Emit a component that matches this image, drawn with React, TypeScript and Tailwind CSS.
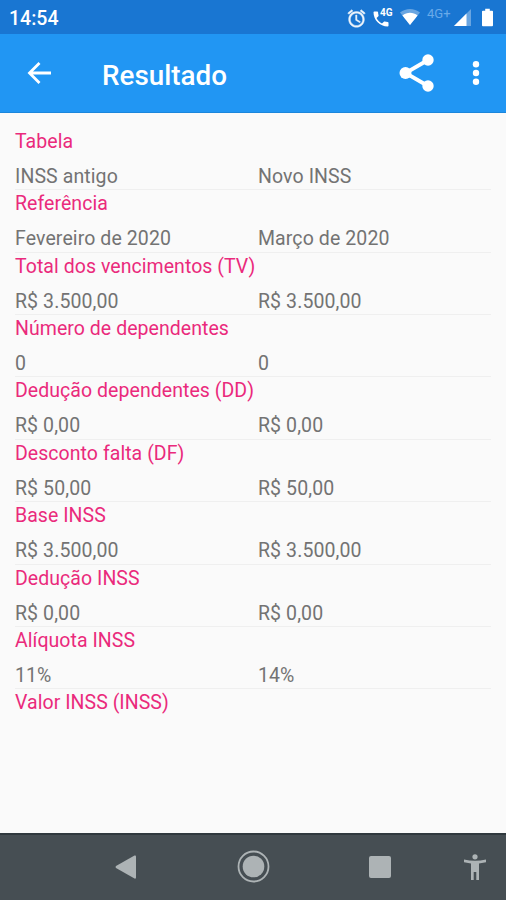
type ResultRow = {
  label: string;
  before?: string;
  after?: string;
};

const rows: ResultRow[] = [
  { label: "Tabela", before: "INSS antigo", after: "Novo INSS" },
  { label: "Referência", before: "Fevereiro de 2020", after: "Março de 2020" },
  { label: "Total dos vencimentos (TV)", before: "R$ 3.500,00", after: "R$ 3.500,00" },
  { label: "Número de dependentes", before: "0", after: "0" },
  { label: "Dedução dependentes (DD)", before: "R$ 0,00", after: "R$ 0,00" },
  { label: "Desconto falta (DF)", before: "R$ 50,00", after: "R$ 50,00" },
  { label: "Base INSS", before: "R$ 3.500,00", after: "R$ 3.500,00" },
  { label: "Dedução INSS", before: "R$ 0,00", after: "R$ 0,00" },
  { label: "Alíquota INSS", before: "11%", after: "14%" },
  { label: "Valor INSS (INSS)" },
];

const StatusBar = () => (
  <div className="flex h-[34px] shrink-0 items-center bg-[#1976d2] pl-[9px] pr-[13px] text-white">
    <span className="mt-[4px] text-[19.5px] font-medium leading-none">14:54</span>

    <div className="ml-auto flex h-full items-center">
      {/* Alarm */}
      <svg className="mt-[2px] h-[21px] w-[21px]" viewBox="0 0 24 24" fill="currentColor" stroke="currentColor" strokeWidth="0.5" opacity="0.92">
        <path d="M22 5.72l-4.6-3.86-1.29 1.53 4.6 3.86L22 5.72zM7.88 3.39L6.6 1.86 2 5.71l1.29 1.53 4.59-3.85zM12.5 8H11v6l4.75 2.85.75-1.23-4-2.37V8zM12 4c-4.97 0-9 4.03-9 9s4.02 9 9 9c4.97 0 9-4.03 9-9s-4.03-9-9-9zm0 16c-3.87 0-7-3.13-7-7s3.13-7 7-7 7 3.13 7 7-3.13 7-7 7z" />
      </svg>

      {/* Call over 4G */}
      <div className="relative ml-[6px] h-[20px] w-[20px]">
        <svg className="absolute -left-[2px] top-[2px] h-[20px] w-[20px]" viewBox="0 0 24 24" fill="currentColor">
          <path d="M6.62 10.79c1.44 2.83 3.76 5.14 6.59 6.59l2.2-2.2c.27-.27.67-.36 1.02-.24 1.12.37 2.33.57 3.57.57.55 0 1 .45 1 1V20c0 .55-.45 1-1 1-9.39 0-17-7.61-17-17 0-.55.45-1 1-1h3.5c.55 0 1 .45 1 1 0 1.25.2 2.45.57 3.57.11.35.03.74-.25 1.02l-2.2 2.2z" />
        </svg>
        <span className="absolute left-[7px] top-[1px] text-[10px] font-bold leading-none">4G</span>
      </div>

      {/* Wi-Fi */}
      <svg className="ml-[7px] h-[18px] w-[20px]" viewBox="0 0 20 18" fill="currentColor">
        <path d="M0 4.5C5.8-.2 14.2-.2 20 4.5L10 17z" opacity="0.35" />
        <path d="M2.4 7.4c4.500-3.500 10.700-3.500 15.200 0L10 17z" />
      </svg>

      <span className="mb-[7px] ml-[7px] w-[24px] text-[13px] leading-none text-[#69aae9]">4G+</span>

      {/* Signal */}
      <svg className="ml-[3px] mt-[1px] h-[17px] w-[17px]" viewBox="0 0 17 17" fill="currentColor">
        <path d="M17 0v17H0z" opacity="0.35" />
        <path d="M12.5 4.5V17H0z" />
      </svg>

      {/* Battery */}
      <svg className="ml-[11px] h-[19px] w-[11px]" viewBox="0 0 12 19" fill="currentColor">
        <path d="M3.5 0h5v2H11a1 1 0 0 1 1 1v15a1 1 0 0 1-1 1H1a1 1 0 0 1-1-1V3a1 1 0 0 1 1-1h2.5z" />
      </svg>
    </div>
  </div>
);

const Toolbar = () => (
  <header className="flex h-[79px] shrink-0 items-center border-b border-[#1b86dc] bg-[#2196f3] pl-[27px] pr-[26px] text-white">
    <svg className="mb-px h-[22px] w-[24px]" viewBox="0 0 24 22" fill="none" stroke="currentColor" strokeWidth="2.8">
      <path d="M24 11H2.500M12.500 1L2.500 11L12.500 21" />
    </svg>
    <h1 className="ml-[51px] mt-[5px] text-[27.8px] font-medium leading-none">Resultado</h1>

    <svg className="ml-auto h-[38px] w-[36px]" viewBox="0 0 36 38" fill="currentColor">
      <path d="M29 6L6.500 19L29 32" fill="none" stroke="currentColor" strokeWidth="3.8" />
      <circle cx="29" cy="6" r="5.7" />
      <circle cx="6.5" cy="19" r="6" />
      <circle cx="29" cy="32" r="5.7" />
    </svg>
    <svg className="ml-[37px] h-[26px] w-[8px]" viewBox="0 0 8 26" fill="currentColor">
      <circle cx="4" cy="4.3" r="3.2" />
      <circle cx="4" cy="13" r="3.2" />
      <circle cx="4" cy="21.7" r="3.2" />
    </svg>
  </header>
);

const ResultItem = ({ label, before, after }: ResultRow) => (
  <div className="h-[62.4px]">
    <div className="h-[27px] whitespace-nowrap leading-[28px] tracking-[0.05px] text-[#ea2a7c]">{label}</div>
    {before && (
      <div className="mt-[8px] grid h-[27.4px] grid-cols-[243px_1fr] border-b border-[#efefef] leading-[28px] tracking-[0.1px] text-[#737373]">
        <span>{before}</span>
        <span>{after}</span>
      </div>
    )}
  </div>
);

const NavigationBar = () => (
  <nav className="flex h-[67px] shrink-0 items-center border-t-2 border-[#30393e] bg-[#464e53] pb-[2px] pl-[115px] pr-[20px] text-[#adb3b5]">
    <svg className="h-[24px] w-[21px]" viewBox="0 0 21 24" fill="currentColor">
      <path d="M19.500.5Q21 0 21 1.500v21Q21 24 19.500 23.500L1 13Q0 12 1 11z" />
    </svg>
    <svg className="ml-[101px] h-[33px] w-[33px]" viewBox="0 0 33 33" fill="currentColor">
      <circle cx="16.5" cy="16.5" r="15" fill="none" stroke="currentColor" strokeWidth="1.8" />
      <circle cx="16.5" cy="16.5" r="10.8" />
    </svg>
    <div className="ml-[99px] h-[22px] w-[22px] rounded-[2px] bg-[#adb3b5]" />
    <svg className="ml-auto h-[26px] w-[22px]" viewBox="0 0 22 26" fill="currentColor">
      <circle cx="11" cy="2.8" r="2.6" />
      <path d="M0 5.500Q11 8 22 5.500V8.300L15 9.500V26H12.300V18H9.700V26H7V9.500L0 8.300z" />
    </svg>
  </nav>
);

const App = () => {
  return (
    <div className="flex h-[900px] w-[506px] flex-col overflow-hidden bg-[#fafafa] font-[Roboto,sans-serif]">
      <StatusBar />
      <Toolbar />
      <main className="min-h-0 flex-1 px-[15px] pt-[14.9px] text-[19.5px]">
        {rows.map((row) => (
          <ResultItem key={row.label} {...row} />
        ))}
      </main>
      <NavigationBar />
    </div>
  );
};

export default App;
